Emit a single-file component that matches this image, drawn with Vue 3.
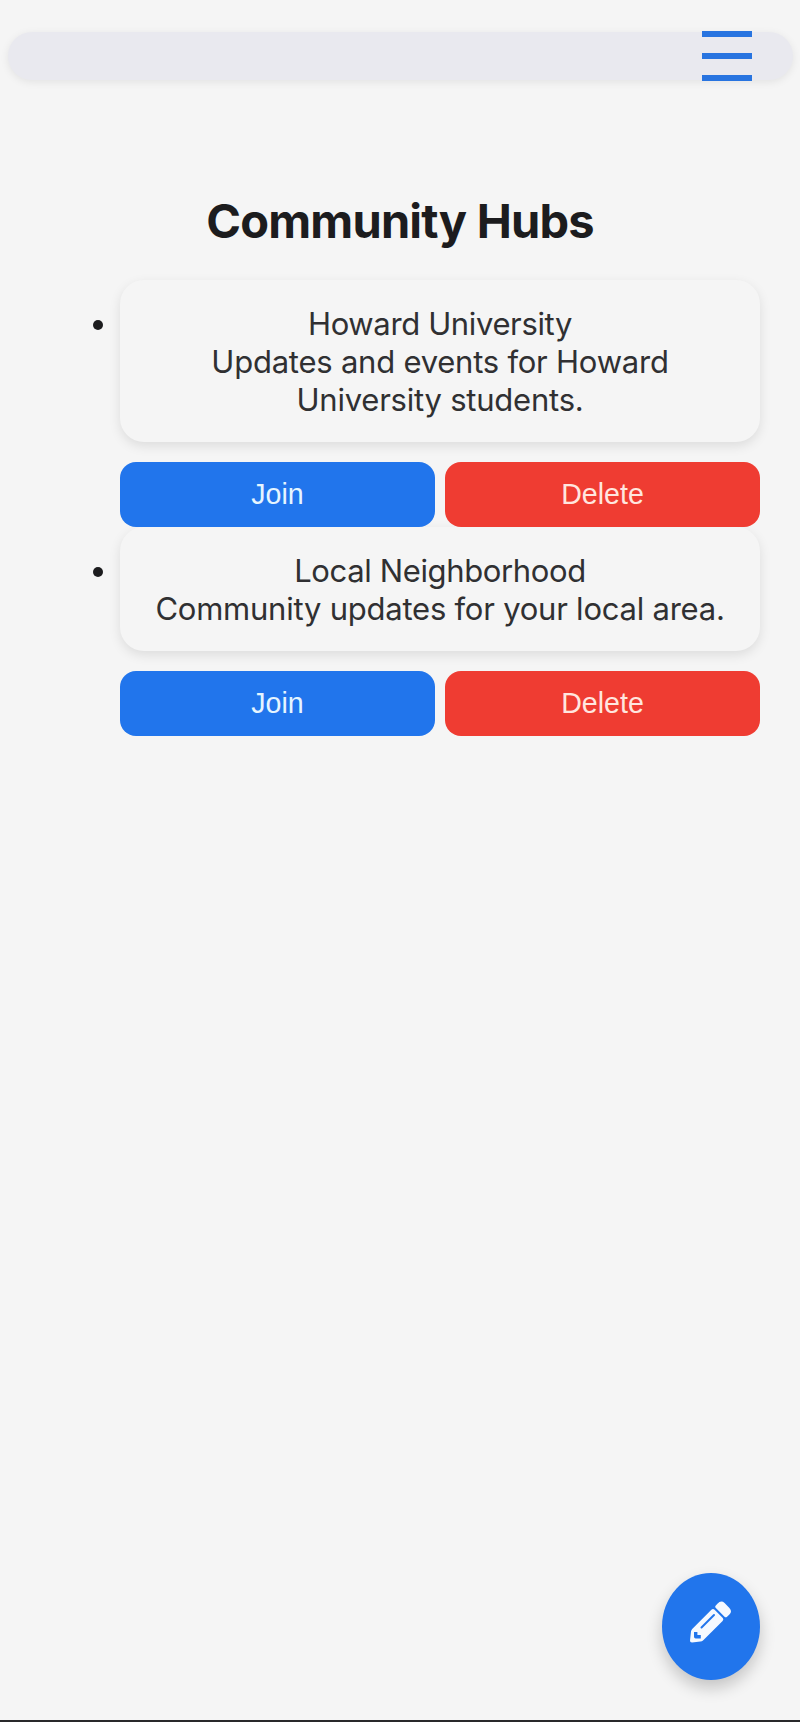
<script setup>
import { ref } from 'vue'

const menuOpen = ref(false)

const hubs = ref([
    {
        id: 1,
        name: 'Howard University',
        description: 'Updates and events for Howard University students.',
        joined: false
    },
    {
        id: 2,
        name: 'Local Neighborhood',
        description: 'Community updates for your local area.',
        joined: false
    }
])

function joinHub(hub) {
    hub.joined = true
}

function deleteHub(id) {
    hubs.value = hubs.value.filter(hub => hub.id !== id)
}
</script>

<template>
    <div class="page">
        <nav class="navbar">
            <button class="menu-toggle" :aria-expanded="menuOpen" @click="menuOpen = !menuOpen">
                <span class="menu-line"></span>
                <span class="menu-line"></span>
                <span class="menu-line"></span>
            </button>
        </nav>

        <main class="content">
            <h1 class="title">Community Hubs</h1>

            <ul class="hub-list">
                <li v-for="hub in hubs" :key="hub.id" class="hub">
                    <span class="bullet"></span>
                    <div class="hub-body">
                        <div class="hub-card">
                            <div class="hub-name">{{ hub.name }}</div>
                            <div class="hub-description">{{ hub.description }}</div>
                        </div>
                        <div class="hub-actions">
                            <button class="btn btn-join" @click="joinHub(hub)">Join</button>
                            <button class="btn btn-delete" @click="deleteHub(hub.id)">Delete</button>
                        </div>
                    </div>
                </li>
            </ul>
        </main>

        <footer class="footer">
            <button class="fab">
                <svg class="fab-icon" viewBox="0 0 44 44" width="44" height="44">
                    <g fill="#f5f9ff">
                        <path d="M28.4 3.8 Q32-.2 35.6 3 L40.4 7.9 Q43.6 11.3 40.4 14.5 L37.8 16.9 Q36.6 17.8 35.5 16.7 L26.6 7.7 Q25.8 6.6 26.6 5.7 Z" />
                        <path d="M22.4 9.8 Q24 8.2 25.6 9.8 L33.8 18 Q35 19.6 33.6 21 L14 40.4 Q13 41.4 11.4 41.6 L3 42.6 Q.8 42.6 1 40.6 L2 31.6 Q2.2 30 3.2 29 Z" />
                    </g>
                    <g fill="none" stroke="#2175ec">
                        <path d="M12.5 27.5 L25 15" stroke-width="2" stroke-linecap="round" />
                        <path d="M6.7 32 V36.8 H11.8" stroke-width="3.4" stroke-linejoin="round" />
                    </g>
                </svg>
            </button>
        </footer>
    </div>
</template>

<style>
body {
    background: #f5f5f5;
}
</style>

<style scoped>
.page {
    box-sizing: border-box;
    display: flex;
    flex-direction: column;
    min-height: 1722px;
    padding-top: 32px;
    border-bottom: 2px solid #29292b;
    background: #f5f5f5;
    color: #1c1c1e;
    font-family: Inter, "Liberation Sans", sans-serif;
}

button {
    padding: 0;
    border: 0;
    cursor: pointer;
}

.navbar {
    display: flex;
    align-items: center;
    justify-content: flex-end;
    height: 48px;
    margin: 0 7px 0 8px;
    padding-right: 41px;
    box-sizing: border-box;
    border-radius: 24px;
    background: #e9e9ef;
    box-shadow: 0 2px 8px rgba(0, 0, 0, 0.08);
}

.menu-toggle {
    display: flex;
    flex-direction: column;
    gap: 16px;
    width: 50px;
    background: none;
}

.menu-line {
    height: 6px;
    background: #2874e0;
}

.content {
    flex: 1;
    padding: 112px 40px 0;
}

.title {
    margin: 0;
    font-size: 47px;
    font-weight: 700;
    line-height: 58px;
    letter-spacing: -0.78px;
    text-align: center;
}

.hub-list {
    margin: 30px 0 0;
    padding: 0;
    list-style: none;
}

.hub {
    display: flex;
}

.bullet {
    flex: none;
    width: 10px;
    height: 10px;
    margin: 40px 17px 0 53px;
    border-radius: 50%;
    background: #1c1c1e;
}

.hub-body {
    flex: 1;
}

.hub-card {
    padding: 25px 24px 23px;
    border-radius: 24px;
    background: #f5f5f5;
    box-shadow: 0 4px 12px rgba(0, 0, 0, 0.1);
    color: #303032;
    font-size: 31px;
    line-height: 38px;
    text-align: center;
}

.hub-name {
    letter-spacing: -0.37px;
}

.hub-description {
    letter-spacing: -0.23px;
}

.hub-actions {
    position: relative;
    display: flex;
    gap: 10px;
    margin-top: 20px;
}

.btn {
    flex: 1;
    height: 65px;
    padding-bottom: 1px;
    border-radius: 16px;
    font-family: "Liberation Sans", sans-serif;
    font-size: 28.6px;
}

.btn-join {
    background: #2175ec;
    color: #e6f5ff;
}

.btn-delete {
    background: #ef3c32;
    color: #ffe6df;
}

.footer {
    display: flex;
    justify-content: flex-end;
    padding: 0 40px 40px;
}

.fab {
    display: flex;
    align-items: center;
    justify-content: center;
    width: 98px;
    height: 107px;
    padding-bottom: 9px;
    border-radius: 50%;
    background: #2175ec;
    box-shadow: 0 8px 16px rgba(0, 0, 0, 0.2);
}

.fab-icon {
    display: block;
}
</style>
